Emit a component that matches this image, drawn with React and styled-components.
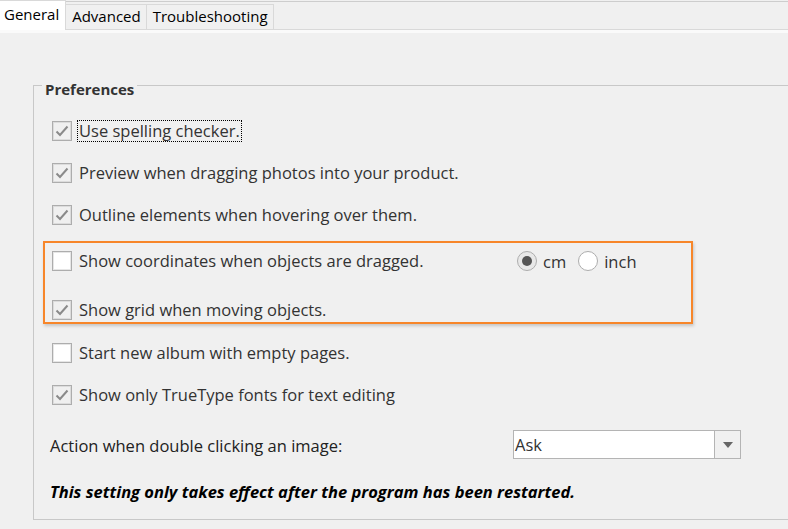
import React from 'react';
import styled, { createGlobalStyle } from 'styled-components';

const GlobalStyle = createGlobalStyle`
    html, body {
        margin: 0;
        padding: 0;
        background: #f0f0f0;
        overflow: hidden;
    }
    body {
        font-family: "Open Sans", "Noto Sans", sans-serif;
        color: #333;
    }
`;

const Page = styled.div`
    width: 788px;
    height: 529px;
    overflow: hidden;
`;

const TabStrip = styled.div`
    margin-top: 1px;
    border-top: 1px solid #cdcdcd;
    height: 27px;
    display: flex;
    align-items: flex-end;
    border-bottom: 1px solid #d9d9d9;
`;

const Tab = styled.div`
    box-sizing: border-box;
    height: ${p => (p.$active ? '30px' : '25px')};
    margin-bottom: ${p => (p.$active ? '-3px' : '0')};
    align-self: ${p => (p.$active ? 'flex-start' : 'flex-end')};
    margin-top: ${p => (p.$active ? '-2px' : '0')};
    padding: ${p => (p.$active ? '3px 6px 0 5px' : '1px 5px 0 6px')};
    background: ${p => (p.$active ? '#fff' : '#f0f0f0')};
    border: 1px solid #d9d9d9;
    border-left: ${p => (p.$active ? 'none' : '1px solid #d9d9d9')};
    border-bottom: none;
    margin-left: -1px;
    font-size: 15px;
    color: #000;
    position: relative;
    z-index: ${p => (p.$active ? 1 : 0)};
`;

const Panel = styled.div`
    border-top: 3px solid #fafafa;
`;

const Group = styled.fieldset`
    margin: 38px -20px 0 33px;
    padding: 0 0 16px 0;
    border: 1px solid #c8c8c8;
    min-width: 0;
`;

const Legend = styled.legend`
    margin-left: 8px;
    padding: 8px 3px 0;
    font-size: 15px;
    line-height: 20px;
    font-weight: 700;
    color: #333;
`;

const Options = styled.div`
    padding: 11px 0 0 18px;
    display: flex;
    flex-direction: column;
`;

const Row = styled.div`
    height: ${p => (p.$compact ? '24px' : '42px')};
    display: flex;
    align-items: center;
`;

const Highlight = styled.div`
    margin: 5px 0 8px -9px;
    width: 650px;
    box-sizing: border-box;
    border: 2px solid #f7862a;
    box-shadow: 1px 2px 3px rgba(0, 0, 0, 0.18);
    padding: 6px 0 0 7px;
    display: flex;
    flex-direction: column;
    gap: 25px;
    height: 83px;
`;

const Box = styled.span`
    box-sizing: border-box;
    width: 20px;
    height: 20px;
    flex: 0 0 20px;
    border: 1px solid #adadad;
    box-shadow: inset 0 0 0 1px ${p => (p.$checked ? '#dcdcdc' : '#e6e6e6')};
    background: ${p => (p.$checked ? '#f0f0f0' : '#fff')};
    display: flex;
    align-items: center;
    justify-content: center;
`;

const Label = styled.span`
    margin-left: 5px;
    font-size: 16.5px;
    line-height: 20px;
    color: #333;
    padding: 0 1px;
    border: 1px ${p => (p.$focus ? 'dotted #000' : 'solid transparent')};
    width: ${p => (p.$width ? `${p.$width}px` : 'auto')};
`;

const Radios = styled.div`
    display: flex;
    align-items: center;
`;

const Radio = styled.span`
    box-sizing: border-box;
    width: 20px;
    height: 20px;
    border-radius: 50%;
    border: 1px solid #adadad;
    background: ${p => (p.$checked ? '#e8e8e8' : '#fff')};
    display: flex;
    align-items: center;
    justify-content: center;
    margin-right: 6px;
    &::after {
        content: '';
        display: ${p => (p.$checked ? 'block' : 'none')};
        width: 10px;
        height: 10px;
        border-radius: 50%;
        background: #555;
    }
`;

const RadioText = styled.span`
    font-size: 16.5px;
    color: #333;
    margin-right: 12px;
`;

const ActionRow = styled.div`
    margin-top: 14px;
    display: flex;
    align-items: center;
    height: 29px;
`;

const ActionLabel = styled.span`
    width: 463px;
    font-size: 16.5px;
    color: #222;
    margin-left: -2px;
    padding-top: 2px;
`;

const Select = styled.div`
    box-sizing: border-box;
    width: 228px;
    height: 29px;
    display: flex;
    background: #fff;
    border: 1px solid #b4b4b4;
`;

const SelectValue = styled.span`
    flex: 1;
    padding: 2px 0 0 1px;
    font-size: 16.5px;
    color: #333;
`;

const SelectButton = styled.span`
    width: 25px;
    border-left: 1px solid #b4b4b4;
    background: #f0f0f0;
    display: flex;
    align-items: center;
    justify-content: center;
`;

const Note = styled.div`
    margin: 22px 0 0 -2px;
    font-size: 16.5px;
    line-height: 22px;
    font-weight: 700;
    font-style: italic;
    color: #000;
`;

const Check = () => (
    <svg width="14" height="12" viewBox="0 0 14 12">
        <path d="M1.5 6.5 L5 10 L12.5 1.5" fill="none" stroke="#8a8a8a" strokeWidth="2" />
    </svg>
);

const CheckBox = ({ checked }) => (
    <Box $checked={checked}>{checked && <Check />}</Box>
);

const Option = ({ checked, text, focus, compact, width, children }) => (
    <Row $compact={compact}>
        <CheckBox checked={checked} />
        <Label $focus={focus} $width={width}>{text}</Label>
        {children}
    </Row>
);

export default function App() {
    return (
        <Page>
            <GlobalStyle />
            <TabStrip>
                <Tab $active>General</Tab>
                <Tab>Advanced</Tab>
                <Tab>Troubleshooting</Tab>
            </TabStrip>
            <Panel>
                <Group>
                    <Legend>Preferences</Legend>
                    <Options>
                        <Option checked focus text="Use spelling checker." />
                        <Option checked text="Preview when dragging photos into your product." />
                        <Option checked text="Outline elements when hovering over them." />
                        <Highlight>
                            <Option compact width={436} text="Show coordinates when objects are dragged.">
                                <Radios>
                                    <Radio $checked />
                                    <RadioText>cm</RadioText>
                                    <Radio />
                                    <RadioText>inch</RadioText>
                                </Radios>
                            </Option>
                            <Option compact checked text="Show grid when moving objects." />
                        </Highlight>
                        <Option text="Start new album with empty pages." />
                        <Option checked text="Show only TrueType fonts for text editing" />
                        <ActionRow>
                            <ActionLabel>Action when double clicking an image:</ActionLabel>
                            <Select>
                                <SelectValue>Ask</SelectValue>
                                <SelectButton>
                                    <svg width="10" height="6" viewBox="0 0 10 6">
                                        <path d="M0 0 H10 L5 6 Z" fill="#666" />
                                    </svg>
                                </SelectButton>
                            </Select>
                        </ActionRow>
                        <Note>This setting only takes effect after the program has been restarted.</Note>
                    </Options>
                </Group>
            </Panel>
        </Page>
    );
}
